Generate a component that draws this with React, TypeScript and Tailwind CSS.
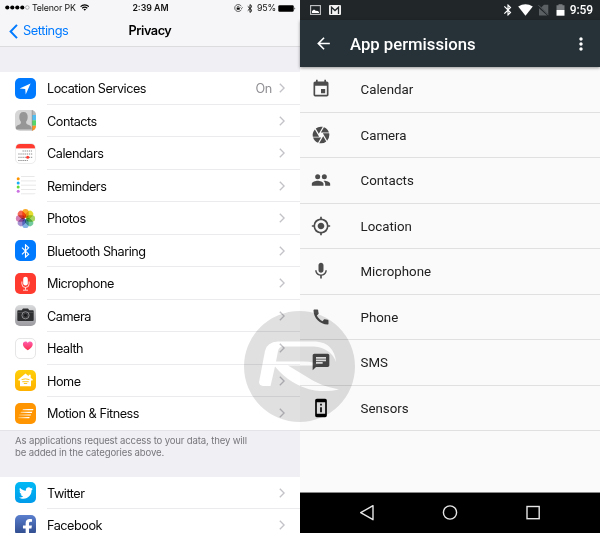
import type { ReactNode } from 'react';
import {
  MdArrowBack,
  MdBluetooth,
  MdCall,
  MdCamera,
  MdChat,
  MdEvent,
  MdMic,
  MdMoreVert,
  MdMyLocation,
  MdPermDeviceInformation,
} from 'react-icons/md';
import { FaFacebookF, FaTwitter } from 'react-icons/fa';

function Tile({ className, children }: { className: string; children?: ReactNode }) {
  return (
    <div className={`flex size-[21px] shrink-0 items-center justify-center overflow-hidden rounded-[5px] ${className}`}>
      {children}
    </div>
  );
}

function BluetoothGlyph({ className }: { className: string }) {
  return (
    <svg viewBox="0 0 10 16" className={className} fill="none" stroke="currentColor" strokeWidth="1.3">
      <path d="M1 4.2 8.6 11.6 5 15V1L8.6 4.4 1 11.8" />
    </svg>
  );
}

function LocationIcon() {
  return (
    <Tile className="bg-[#007aff]">
      <svg viewBox="0 0 21 21" className="size-full" fill="#fff">
        <path d="M15.6 5.4 4.6 10.5l5.6.5.5 5.4z" />
      </svg>
    </Tile>
  );
}

function ContactsIcon() {
  return (
    <Tile className="bg-[#d6d6d6]">
      <svg viewBox="0 0 21 21" className="size-full">
        <rect x="17" y="0" width="4" height="5" fill="#b9b9b9" />
        <rect x="17" y="5" width="4" height="5.3" fill="#55bef0" />
        <rect x="17" y="10.3" width="4" height="5.4" fill="#53d769" />
        <rect x="17" y="15.7" width="4" height="5.3" fill="#fd9426" />
        <path d="M17.2 0v21" stroke="#8c8c8c" strokeWidth=".6" />
        <path
          d="M8.5 2c3 0 4.300 2 4.200 5 0 2-.7 3.500-1.500 4.500-.4 1.700.3 2.500 2 3.200 2 .8 3.200 1.600 3.500 3.800V19.500H0.500v-1c.4-2.200 1.500-3 3.500-3.800 1.700-.7 2.200-1.500 1.800-3.200C5 10.500 4.300 9 4.300 7c-.1-3 1.200-5 4.200-5z"
          fill="#969696"
        />
      </svg>
    </Tile>
  );
}

function CalendarIcon() {
  return (
    <Tile className="border border-[#ededed] bg-white">
      <svg viewBox="0 0 21 21" className="size-[21px] shrink-0">
        <rect width="21" height="5.400" fill="#ff3b30" />
        <g stroke="#8b8b8b" strokeWidth="1" strokeDasharray="1.300 .8">
          <path d="M7.500 8h9.500M3.300 11h14M3.300 14.300h14M3.300 17.500h9.500" />
        </g>
        <circle cx="12.700" cy="14.300" r="1.500" fill="#ff3b30" />
      </svg>
    </Tile>
  );
}

function RemindersIcon() {
  return (
    <Tile className="bg-white">
      <svg viewBox="0 0 21 21" className="size-full">
        <path d="M6 1.500h15M6 5.900h15M6 10.200h15M6 14.500h15M6 18.800h15" stroke="#e2e2e2" strokeWidth=".8" />
        <circle cx="3.200" cy="3.700" r="1.500" fill="#ff9500" />
        <circle cx="3.200" cy="7.900" r="1.500" fill="#1badf8" />
        <circle cx="3.200" cy="12" r="1.500" fill="#63da38" />
        <circle cx="3.200" cy="16.200" r="1.500" fill="#cc73e1" />
      </svg>
    </Tile>
  );
}

const petals = ['#fba51c', '#e3dc25', '#a5d357', '#6cc79a', '#7cb0e4', '#a08bd0', '#d07ab2', '#f5604a'];

function PhotosIcon() {
  return (
    <Tile className="bg-white">
      <svg viewBox="0 0 21 21" className="size-full">
        {petals.map((color, i) => (
          <rect
            key={color}
            x="7.300"
            y=".9"
            width="6.400"
            height="9"
            rx="3.200"
            fill={color}
            className="mix-blend-multiply"
            opacity=".95"
            transform={`rotate(${i * 45} 10.500 10.500)`}
          />
        ))}
      </svg>
    </Tile>
  );
}

function MicrophoneIcon() {
  return (
    <Tile className="bg-[#ff3b30]">
      <svg viewBox="0 0 21 21" className="size-full" fill="none" stroke="#fff" strokeWidth=".8">
        <rect x="8.200" y="3.800" width="4.600" height="8.700" rx="2.300" fill="#fff" stroke="none" />
        <path d="M6.900 8.500v2.400a3.600 3.600 0 0 0 7.200 0V8.500M10.500 14.500v2.300M8 17.200h5" />
      </svg>
    </Tile>
  );
}

function CameraIcon() {
  return (
    <Tile className="bg-gradient-to-b from-[#dadbdc] to-[#9b9ba0]">
      <svg viewBox="0 0 21 21" className="size-full">
        <path
          d="M3.200 5.200h3.500L8 3.500h5l1.300 1.700h3.500q.9 0 .9.900v8.900q0 .9-.9.900H3.200q-.9 0-.9-.9V6.100q0-.9.900-.9z"
          fill="#2e2f31"
        />
        <path d="M2.300 7.500h16.400" stroke="#66676b" strokeWidth=".5" />
        <circle cx="10.500" cy="10.300" r="3.600" fill="#2e2f31" stroke="#a4a5a8" strokeWidth=".8" />
        <circle cx="10.500" cy="10.300" r="2" fill="#17181a" stroke="#66676b" strokeWidth=".5" />
      </svg>
    </Tile>
  );
}

function HealthIcon() {
  return (
    <Tile className="border border-[#e6e6e6] bg-white">
      <svg viewBox="0 0 21 21" className="size-[21px] shrink-0">
        <defs>
          <linearGradient id="heart" x1="0" y1="0" x2="0" y2="1">
            <stop offset="0" stopColor="#ff5fae" />
            <stop offset="1" stopColor="#fb2b48" />
          </linearGradient>
        </defs>
        <path
          d="M12.800 12.300C9.500 10 7.900 8.400 7.900 6.300c0-3.100 3.600-3.700 4.900-1.300 1.300-2.400 4.900-1.800 4.900 1.300 0 2.100-1.600 3.700-4.900 6z"
          fill="url(#heart)"
        />
      </svg>
    </Tile>
  );
}

function HomeIcon() {
  return (
    <Tile className="bg-gradient-to-b from-[#ffcf0a] to-[#ffb100]">
      <svg viewBox="0 0 21 21" className="size-full">
        <path d="M10.500 3.600 13.700 6.200V4.800h2v3l2.300 2-.6.800H16v5.700H5v-5.700H3.600L3 9.800z" fill="#fff" />
        <g stroke="#ffc107" strokeWidth=".9" fill="none">
          <path d="M6.600 9.600q3.900-1.500 7.800 0M7.300 11.700h6.400M8.800 13.500h3.400" />
        </g>
      </svg>
    </Tile>
  );
}

function MotionIcon() {
  return (
    <Tile className="bg-[#ff9500]">
      <svg viewBox="0 0 21 21" className="size-full">
        <defs>
          <linearGradient id="streak" gradientUnits="userSpaceOnUse" x1="3" y1="0" x2="17" y2="0">
            <stop offset="0" stopColor="#fff" stopOpacity=".25" />
            <stop offset=".75" stopColor="#fff" />
          </linearGradient>
        </defs>
        <path
          d="M8 6h10.500l-.5 1.200H7.300zM6 8.700h11.300l-.5 1.200H5.400zM4.300 11.400h11.800l-.5 1.200H3.700zM3.500 14.100h11.200l-.5 1.200H3z"
          fill="url(#streak)"
        />
      </svg>
    </Tile>
  );
}

type Row = { label: string; icon: ReactNode; value?: string };

const privacyRows: Row[] = [
  { label: 'Location Services', icon: <LocationIcon />, value: 'On' },
  { label: 'Contacts', icon: <ContactsIcon /> },
  { label: 'Calendars', icon: <CalendarIcon /> },
  { label: 'Reminders', icon: <RemindersIcon /> },
  { label: 'Photos', icon: <PhotosIcon /> },
  {
    label: 'Bluetooth Sharing',
    icon: (
      <Tile className="bg-[#007aff] text-white">
        <BluetoothGlyph className="h-[14px] w-[9px]" />
      </Tile>
    ),
  },
  { label: 'Microphone', icon: <MicrophoneIcon /> },
  { label: 'Camera', icon: <CameraIcon /> },
  { label: 'Health', icon: <HealthIcon /> },
  { label: 'Home', icon: <HomeIcon /> },
  { label: 'Motion & Fitness', icon: <MotionIcon /> },
];

const socialRows: Row[] = [
  {
    label: 'Twitter',
    icon: (
      <Tile className="bg-gradient-to-b from-[#00b9f5] to-[#009bea] text-white">
        <FaTwitter className="size-[14px]" />
      </Tile>
    ),
  },
  {
    label: 'Facebook',
    icon: (
      <Tile className="bg-gradient-to-b from-[#5b7fce] to-[#2c4788] text-white">
        <FaFacebookF className="mt-[5px] ml-[4px] size-[17px]" />
      </Tile>
    ),
  },
];

function IosRow({ row, last }: { row: Row; last: boolean }) {
  return (
    <div className="flex h-[32.5px] items-center bg-white pl-[15px]">
      {row.icon}
      <div
        className={`ml-[11px] flex h-full flex-1 items-center border-b pr-[15px] ${last ? 'border-transparent' : 'border-[#ebebed]'}`}
      >
        <span className="flex-1 pt-[4px] text-[12.700px] tracking-[-0.480px] text-[#0a0a0a]">{row.label}</span>
        {row.value && (
          <span className="mr-[7px] pt-[4px] text-[12.700px] tracking-[-0.300px] text-[#8e8e93]">{row.value}</span>
        )}
        <svg viewBox="0 0 6 10" className="mt-px h-[10px] w-[6px]" fill="none" stroke="#c2c2c7" strokeWidth="1.300">
          <path d="m.8.700 4.300 4.300L.8 9.300" />
        </svg>
      </div>
    </div>
  );
}

function IosStatusBar() {
  return (
    <div className="flex h-4 items-center pl-[5px] pr-[4px] text-[8.800px] text-[#111]">
      <div className="flex flex-1 items-center">
        <svg viewBox="0 0 25 5" className="h-[5px] w-[25px]" fill="#000">
          <circle cx="2.300" cy="2.500" r="2.100" />
          <circle cx="7.300" cy="2.500" r="2.100" />
          <circle cx="12.300" cy="2.500" r="2.100" />
          <circle cx="17.300" cy="2.500" r="2.100" />
          <circle cx="22.300" cy="2.500" r="1.800" fill="none" stroke="#777" strokeWidth=".5" />
        </svg>
        <span className="ml-[2px] tracking-[-0.150px]">Telenor PK</span>
        <svg viewBox="0 0 10 7" className="ml-[4px] h-[7px] w-[9.500px]" fill="none" stroke="#000" strokeWidth="1.200">
          <path d="M.6 2.600a6.300 6.300 0 0 1 8.800 0M2.300 4.300a3.900 3.900 0 0 1 5.400 0" />
          <path d="M3.600 5.400 5 6.900l1.400-1.500q-1.400-1-2.800 0z" fill="#000" stroke="none" />
        </svg>
      </div>
      <span className="font-semibold">2:39 AM</span>
      <div className="flex flex-1 items-center justify-end">
        <svg viewBox="0 0 9 8" className="h-[8px] w-[9px]" fill="none" stroke="#222" strokeWidth=".7">
          <path d="M7.300 2.300a3.500 3.500 0 1 0 0 3.400M6.500 3.500l1.100 1 1-1.100" />
          <rect x="2.700" y="3.700" width="3" height="2" fill="#000" stroke="none" />
          <path d="M3.300 3.700v-.5a.9.900 0 0 1 1.800 0v.5" />
        </svg>
        <BluetoothGlyph className="ml-[4px] h-[9px] w-[6px] stroke-[1.700]" />
        <span className="ml-[4px] tracking-[-0.150px]">95%</span>
        <svg viewBox="0 0 18 7" className="ml-[2px] h-[7px] w-[18px]">
          <rect x=".3" y=".3" width="15.400" height="6.400" rx="1.200" fill="#000" />
          <path d="M16.500 2.200q1.500 1.300 0 2.600z" fill="#000" />
        </svg>
      </div>
    </div>
  );
}

function IosPrivacy() {
  return (
    <section className="h-full w-[300px] overflow-hidden bg-[#efeff4] font-['Inter','Liberation_Sans',sans-serif] leading-none">
      <header className="h-[46.500px] border-b border-[#dcdcdf] bg-[#f6f6f8]">
        <IosStatusBar />
        <div className="grid h-[30px] grid-cols-3 items-center">
          <div className="flex items-center pl-[9px] text-[#007aff]">
            <svg viewBox="0 0 9 15" className="h-[15px] w-[9px]" fill="none" stroke="currentColor" strokeWidth="2">
              <path d="M8 .9 1.600 7.500 8 14.100" />
            </svg>
            <span className="ml-[5px] pt-px text-[12.800px] tracking-[-0.450px]">Settings</span>
          </div>
          <h1 className="text-center text-[12.700px] font-semibold tracking-[-0.450px] text-black">Privacy</h1>
        </div>
      </header>
      <div className="h-[25.500px]" />
      {privacyRows.map((row, i) => (
        <IosRow key={row.label} row={row} last={i === privacyRows.length - 1} />
      ))}
      <p className="h-[47px] border-t border-[#e4e4e8] pl-[15px] pt-[4px] text-[9.600px] leading-[12px] tracking-[-0.160px] text-[#77777c]">
        As applications request access to your data, they will
        <br />
        be added in the categories above.
      </p>
      {socialRows.map((row) => (
        <IosRow key={row.label} row={row} last={false} />
      ))}
    </section>
  );
}

function PeopleIcon() {
  return (
    <svg viewBox="0 0 24 24" className="size-[1em]" fill="currentColor">
      <circle cx="8" cy="8" r="3" />
      <circle cx="16" cy="8" r="3" />
      <path d="M8 13c-2.330 0-7 1.170-7 3.500V19h14v-2.500c0-2.330-4.670-3.500-7-3.500zm8 0c-.290 0-.620.020-.970.050 1.160.840 1.970 1.970 1.970 3.450V19h6v-2.500c0-2.330-4.670-3.500-7-3.500z" />
    </svg>
  );
}

const permissions: { label: string; icon: ReactNode }[] = [
  { label: 'Calendar', icon: <MdEvent /> },
  { label: 'Camera', icon: <MdCamera /> },
  { label: 'Contacts', icon: <PeopleIcon /> },
  { label: 'Location', icon: <MdMyLocation /> },
  { label: 'Microphone', icon: <MdMic /> },
  { label: 'Phone', icon: <MdCall /> },
  { label: 'SMS', icon: <MdChat /> },
  { label: 'Sensors', icon: <MdPermDeviceInformation className="text-black" /> },
];

function AndroidStatusBar() {
  return (
    <div className="flex h-5 items-center bg-[#212629] pl-[10px] pr-[7px] text-white">
      <svg viewBox="0 0 11 10" className="h-[10px] w-[11px]">
        <rect x=".6" y=".6" width="9.800" height="8.800" fill="none" stroke="#c5c7c8" strokeWidth="1.100" />
        <path d="M2 8V6l2-1.600 1.700 1.300L7.800 6 9 7v1z" fill="#fff" />
      </svg>
      <svg viewBox="0 0 12 10" className="ml-[8px] h-[10px] w-[12px]">
        <rect width="12" height="10" rx="1" fill="#f2f2f2" />
        <path d="M2.500 9V2.200L6 5.500l3.500-3.300V9" fill="none" stroke="#212629" strokeWidth="1.300" />
      </svg>
      <MdBluetooth className="ml-auto size-[14px]" />
      <svg viewBox="0 0 15 12" className="ml-[3px] h-[12px] w-[15px]" fill="#fff">
        <path d="M7.500 11.700.2 2.600Q7.500-2 14.800 2.600z" />
      </svg>
      <svg viewBox="0 0 11 12" className="ml-[5px] h-[12px] w-[11px]">
        <path d="M10.300.7v9.800L3.200 3.400 6 .7zM1 4.200v7.200h8.200z" fill="#5b6063" />
        <path d="m.5 1.200 10 10" stroke="#5b6063" strokeWidth="1" />
      </svg>
      <svg viewBox="0 0 9 12" className="ml-[7px] h-[12px] w-[9px]">
        <path d="M.5 1.300h2V.2h4v1.100h2V6h-8z" fill="#777b7e" />
        <path d="M.5 6h8v5.700h-8z" fill="#fff" />
      </svg>
      <span className="ml-[5px] text-[12px] font-medium leading-none tracking-[-0.100px]">9:59</span>
    </div>
  );
}

function AndroidPermissions() {
  return (
    <section className="flex h-full w-[300px] flex-col bg-[#fafafa] font-['Roboto','Liberation_Sans',sans-serif]">
      <AndroidStatusBar />
      <header className="flex h-[47px] items-center bg-[#263238] pl-[14px] pr-[9px] text-white shadow-[0_1px_3px_rgba(0,0,0,0.4)]">
        <MdArrowBack className="size-[19px]" />
        <h1 className="ml-[17px] flex-1 pt-[3px] text-[16.700px] font-medium leading-none">App permissions</h1>
        <MdMoreVert className="size-[20px]" />
      </header>
      <ul className="flex-1">
        {permissions.map((item) => (
          <li key={item.label} className="flex h-[45.500px] items-center border-b border-[#e0e0e0] pl-[10.500px]">
            <span className="text-[20px] text-[#4c4c4c]">{item.icon}</span>
            <span className="ml-[30px] pt-px text-[13.300px] leading-none text-[#212121]">{item.label}</span>
          </li>
        ))}
      </ul>
      <nav className="flex h-[41px] items-center border-t border-[#888] bg-black">
        <svg viewBox="0 0 300 40" className="h-10 w-[300px]" fill="none" stroke="#e6e6e6" strokeWidth="1.400">
          <path d="M73 12.700v14L60.700 19.700z" strokeLinejoin="round" />
          <circle cx="150" cy="19.500" r="6.600" />
          <rect x="227" y="13.500" width="12.200" height="12.200" />
        </svg>
      </nav>
    </section>
  );
}

/* Translucent disc with the stylised mark cut out of it, so the rows show through. */
function Watermark() {
  return (
    <svg viewBox="0 0 111 111" className="pointer-events-none absolute left-[244px] top-[311px] size-[111px]">
      <path
        d="M0 55.500a55.500 55.500 0 1 0 111 0a55.500 55.500 0 1 0-111 0z M15 71.500Q15.500 74.500 19 75h7.500L31 55.500 Q47 75 71 79.500 Q84 81 95 78.500 Q76 75 63 66 L44 54.500 H76 Q70 50.500 60 50.500 H32 L34 40 Q35 35.500 39 35.500 H70 Q87 37 92 51 Q90 32 72 30.500 H34 Q23 31 21 40z"
        fill="#000"
        fillRule="evenodd"
        opacity=".12"
      />
    </svg>
  );
}

export default function App() {
  return (
    <main className="relative flex h-[533px] w-[600px] overflow-hidden">
      <IosPrivacy />
      <AndroidPermissions />
      <Watermark />
    </main>
  );
}
